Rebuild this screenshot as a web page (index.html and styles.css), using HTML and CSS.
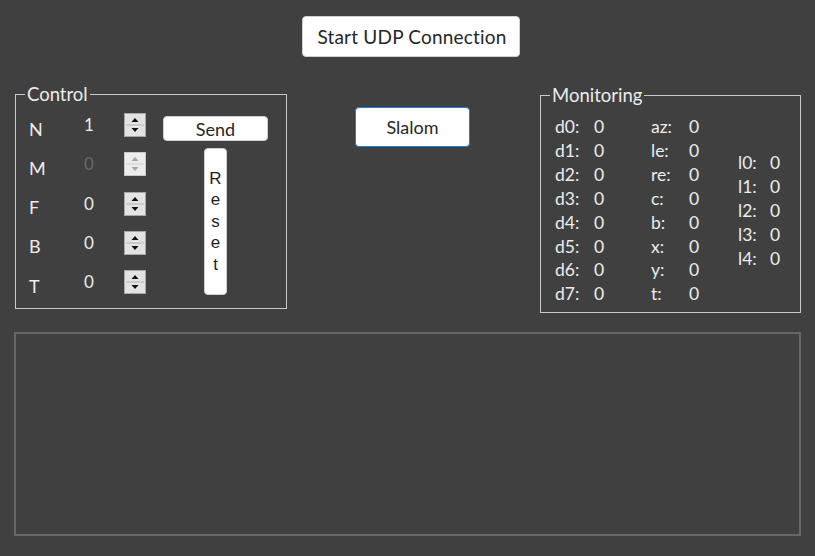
FILE: index.html
```html
<!DOCTYPE html>
<html>
<head>
<meta charset="utf-8">
<link rel="stylesheet" href="styles.css">
</head>
<body>
<div class="app">
  <div class="top">
    <button class="btn btn-udp">Start UDP Connection</button>
  </div>
  <div class="middle">
    <div class="group control">
      <span class="legend">Control</span>
      <div class="control-body">
        <div class="rows">
          <div class="row"><span class="lbl">N</span><span class="val">1</span>
            <svg class="spin" width="22" height="24" viewBox="0 0 22 24"><rect x="0.5" y="0.5" width="21" height="23" fill="#e3e3e3" stroke="#a8a8a8"/><line x1="2" y1="12" x2="20" y2="12" stroke="#b4b4b4"/><polygon points="7.5,9 14.5,9 11,5" fill="#111"/><polygon points="7.5,15 14.5,15 11,19" fill="#111"/></svg></div>
          <div class="row"><span class="lbl">M</span><span class="val dis">0</span>
            <svg class="spin" width="22" height="24" viewBox="0 0 22 24"><rect x="0.5" y="0.5" width="21" height="23" fill="#ececec" stroke="#c8c8c8"/><line x1="2" y1="12" x2="20" y2="12" stroke="#cfcfcf"/><polygon points="7.5,9 14.5,9 11,5" fill="#a5a5a5"/><polygon points="7.5,15 14.5,15 11,19" fill="#a5a5a5"/></svg></div>
          <div class="row"><span class="lbl">F</span><span class="val">0</span>
            <svg class="spin" width="22" height="24" viewBox="0 0 22 24"><rect x="0.5" y="0.5" width="21" height="23" fill="#e3e3e3" stroke="#a8a8a8"/><line x1="2" y1="12" x2="20" y2="12" stroke="#b4b4b4"/><polygon points="7.5,9 14.5,9 11,5" fill="#111"/><polygon points="7.5,15 14.5,15 11,19" fill="#111"/></svg></div>
          <div class="row"><span class="lbl">B</span><span class="val">0</span>
            <svg class="spin" width="22" height="24" viewBox="0 0 22 24"><rect x="0.5" y="0.5" width="21" height="23" fill="#e3e3e3" stroke="#a8a8a8"/><line x1="2" y1="12" x2="20" y2="12" stroke="#b4b4b4"/><polygon points="7.5,9 14.5,9 11,5" fill="#111"/><polygon points="7.5,15 14.5,15 11,19" fill="#111"/></svg></div>
          <div class="row"><span class="lbl">T</span><span class="val">0</span>
            <svg class="spin" width="22" height="24" viewBox="0 0 22 24"><rect x="0.5" y="0.5" width="21" height="23" fill="#e3e3e3" stroke="#a8a8a8"/><line x1="2" y1="12" x2="20" y2="12" stroke="#b4b4b4"/><polygon points="7.5,9 14.5,9 11,5" fill="#111"/><polygon points="7.5,15 14.5,15 11,19" fill="#111"/></svg></div>
        </div>
        <div class="actions">
          <button class="btn btn-send">Send</button>
          <button class="btn btn-reset"><span>R</span><span>e</span><span>s</span><span>e</span><span>t</span></button>
        </div>
      </div>
    </div>
    <button class="btn btn-slalom">Slalom</button>
    <div class="group monitor">
      <span class="legend">Monitoring</span>
      <div class="mon-body">
        <div class="mcol c1">
          <span>d0:</span><span>0</span>
          <span>d1:</span><span>0</span>
          <span>d2:</span><span>0</span>
          <span>d3:</span><span>0</span>
          <span>d4:</span><span>0</span>
          <span>d5:</span><span>0</span>
          <span>d6:</span><span>0</span>
          <span>d7:</span><span>0</span>
        </div>
        <div class="mcol c2">
          <span>az:</span><span>0</span>
          <span>le:</span><span>0</span>
          <span>re:</span><span>0</span>
          <span>c:</span><span>0</span>
          <span>b:</span><span>0</span>
          <span>x:</span><span>0</span>
          <span>y:</span><span>0</span>
          <span>t:</span><span>0</span>
        </div>
        <div class="mcol c3">
          <span>l0:</span><span>0</span>
          <span>l1:</span><span>0</span>
          <span>l2:</span><span>0</span>
          <span>l3:</span><span>0</span>
          <span>l4:</span><span>0</span>
        </div>
      </div>
    </div>
  </div>
  <div class="log"></div>
</div>
</body>
</html>
```
FILE: styles.css
```css
html, body {
  margin: 0;
  padding: 0;
  background: #404040;
}
.app {
  width: 815px;
  height: 556px;
  background: #404040;
  font-family: Lato, "Open Sans", sans-serif;
  color: #ececec;
  overflow: hidden;
}
.top {
  display: flex;
  justify-content: center;
  padding-top: 16px;
  padding-left: 7px;
}
.btn {
  font-family: Lato, "Open Sans", sans-serif;
  background: #ffffff;
  color: #262626;
  border: 1px solid #d0d0d0;
  border-radius: 4px;
  padding: 0;
  margin: 0;
  box-sizing: border-box;
}
.btn-udp {
  width: 218px;
  height: 41px;
  font-size: 19px;
  letter-spacing: 0.2px;
  padding-left: 2px;
}
.middle {
  display: flex;
  align-items: flex-start;
  margin-top: 37px;
  padding-left: 15px;
}
.group {
  position: relative;
  border: 1px solid #c9c9c9;
  box-sizing: border-box;
}
.legend {
  position: absolute;
  top: -11px;
  left: 9px;
  padding: 0 2px;
  background: #404040;
  font-size: 18.5px;
  line-height: 20px;
  color: #ececec;
}
.control {
  width: 272px;
  height: 215px;
}
.control-body {
  display: flex;
  padding: 17px 0 0 13px;
}
.rows {
  display: flex;
  flex-direction: column;
  gap: 13.25px;
}
.row {
  display: flex;
  align-items: center;
  height: 26px;
}
.lbl {
  width: 50px;
  font-size: 18px;
  padding-top: 7px;
}
.val {
  width: 20px;
  text-align: center;
  font-size: 17px;
  padding-bottom: 1px;
}
.val.dis {
  color: #686868;
}
.spin {
  display: block;
  margin-left: 25px;
}
.actions {
  display: flex;
  flex-direction: column;
  align-items: center;
  width: 105px;
  margin-left: 17px;
  padding-top: 4px;
  gap: 7px;
}
.btn-send {
  width: 105px;
  height: 25px;
  font-size: 18px;
  line-height: 23px;
  padding-top: 1px;
}
.btn-reset {
  width: 23px;
  height: 147px;
  display: flex;
  flex-direction: column;
  align-items: center;
  justify-content: center;
  font-family: "Liberation Sans", Arial, sans-serif;
  font-size: 17px;
  line-height: 21.5px;
  color: #1e1e1e;
  padding-bottom: 0;
}
.btn-slalom {
  width: 115px;
  height: 40px;
  margin-top: 13px;
  margin-left: 68px;
  font-size: 18px;
  border: 1px solid #1a7fd8;
}
.monitor {
  width: 261px;
  height: 218px;
  margin-top: 1px;
  margin-left: 70px;
}
.mon-body {
  display: flex;
  align-items: flex-start;
  padding: 19px 0 0 14px;
  font-size: 17.5px;
  line-height: 23.9px;
}
.mcol {
  display: grid;
  align-content: start;
}
.c1 {
  grid-template-columns: 39px 57px;
}
.c2 {
  grid-template-columns: 38px 49px;
}
.c3 {
  grid-template-columns: 32px 20px;
  padding-top: 36px;
}
.log {
  margin: 19px 0 0 14px;
  width: 787px;
  height: 204px;
  box-sizing: border-box;
  border: 2px solid #676767;
}
```
